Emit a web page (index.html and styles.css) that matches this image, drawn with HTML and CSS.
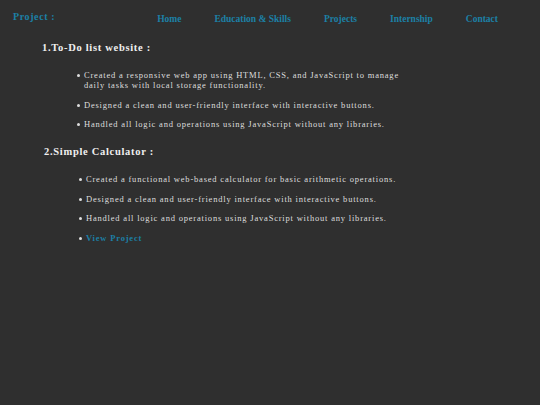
FILE: index.html
```html
<!DOCTYPE html>
<html lang="en">
<head>
    <meta charset="UTF-8">
    <meta name="viewport" content="width=device-width, initial-scale=1.0">
    <title>Projects</title>
    <link rel="stylesheet" href="styles.css">
</head>
<body>
    <header class="top-bar">
        <div class="brand">Project :</div>
        <nav class="nav">
            <a href="#">Home</a>
            <a href="#">Education &amp; Skills</a>
            <a href="#">Projects</a>
            <a href="#">Internship</a>
            <a href="#">Contact</a>
        </nav>
    </header>

    <section class="project">
        <h2>1.To-Do list website :</h2>
        <ul>
            <li>Created a responsive web app using HTML, CSS, and JavaScript to manage daily tasks with local storage functionality.</li>
            <li>Designed a clean and user-friendly interface with interactive buttons.</li>
            <li>Handled all logic and operations using JavaScript without any libraries.</li>
        </ul>
    </section>

    <section class="project second">
        <h2>2.Simple Calculator :</h2>
        <ul>
            <li>Created a functional web-based calculator for basic arithmetic operations.</li>
            <li>Designed a clean and user-friendly interface with interactive buttons.</li>
            <li>Handled all logic and operations using JavaScript without any libraries.</li>
            <li><a href="#" class="view">View Project</a></li>
        </ul>
    </section>
</body>
</html>
```

FILE: styles.css
```css
/* page */
body {
    margin: 0;
    background-color: #2f2f2f;
    color: #e0e0e0;
    font-family: 'Liberation Serif', 'Times New Roman', serif;
}

a {
    text-decoration: none;
}

/* header */
.top-bar {
    display: flex;
    justify-content: space-between;
    align-items: flex-start;
    padding: 11px 42px 0 13px;
}

.brand {
    color: #1c80a6;
    font-weight: bold;
    font-size: 10px;
    letter-spacing: 0.6px;
}

.nav {
    display: flex;
    gap: 33px;
    padding-top: 3px;
}

.nav a {
    color: #1c80a6;
    font-weight: bold;
    font-size: 9.5px;
}

/* project sections */
.project {
    padding-left: 42px;
}

.project h2 {
    margin: 18px 0 0;
    font-size: 10.5px;
    letter-spacing: 0.7px;
    color: #f0f0f0;
}

.project ul {
    margin: 17px 0 0;
    padding-left: 35px;
    width: 330px;
    list-style: none;
}

.project li {
    position: relative;
    padding-left: 7px;
    margin-bottom: 9.5px;
    font-size: 8.5px;
    line-height: 10px;
    letter-spacing: 0.8px;
    color: #dedede;
}

.project li::before {
    content: '';
    position: absolute;
    left: 0;
    top: 4px;
    width: 3px;
    height: 3px;
    border-radius: 50%;
    background-color: #dedede;
}

.second {
    padding-left: 44px;
}

.second h2 {
    margin-top: 17px;
}

.view {
    color: #1c80a6;
    font-weight: bold;
}
```
